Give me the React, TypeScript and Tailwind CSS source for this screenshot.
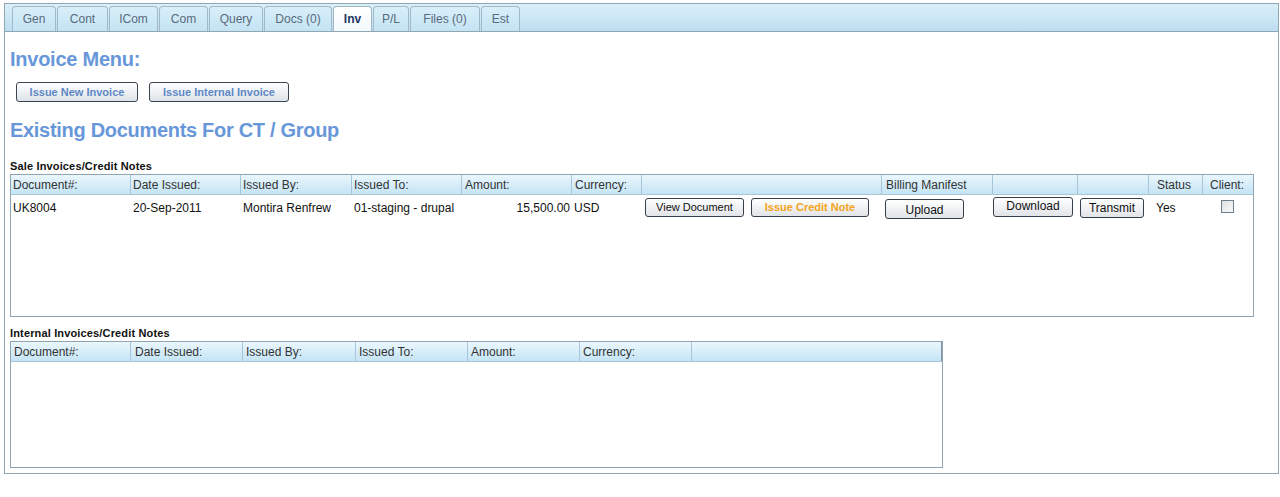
import React from "react";

const tabs: { label: string; w: string; active?: boolean }[] = [
  { label: "Gen", w: "w-[44px]" },
  { label: "Cont", w: "w-[51px]" },
  { label: "ICom", w: "w-[49px]" },
  { label: "Com", w: "w-[49px]" },
  { label: "Query", w: "w-[54px]" },
  { label: "Docs (0)", w: "w-[68px]" },
  { label: "Inv", w: "w-[39px]", active: true },
  { label: "P/L", w: "w-[36px]" },
  { label: "Files (0)", w: "w-[70px]" },
  { label: "Est", w: "w-[39px]" },
];

const headCell =
  "h-full flex items-center text-[12px] text-[#333] border-l border-[#a9c6d8] whitespace-nowrap";

function TopButton({ children, w }: { children: React.ReactNode; w: string }) {
  return (
    <button
      className={`${w} h-[20px] rounded-[3px] border border-[#3c4650] bg-gradient-to-b from-white to-[#dde3e9] text-[11px] font-bold text-[#5f88c6] flex items-center justify-center leading-none`}
    >
      {children}
    </button>
  );
}

function RowButton({
  children,
  cls,
}: {
  children: React.ReactNode;
  cls: string;
}) {
  return (
    <button
      className={`rounded-[3px] border border-[#36404a] bg-gradient-to-b from-white to-[#e1e4e8] flex justify-center leading-none ${cls}`}
    >
      {children}
    </button>
  );
}

export default function App() {
  return (
    <div className="w-[1280px] h-[497px] bg-white font-['Liberation_Sans',Arial,sans-serif] pt-[3px]">
      <div className="ml-[4px] w-[1275px] h-[471px] border border-[#8fa7b3] flex flex-col">
        {/* Tab strip */}
        <div className="h-[28px] shrink-0 border-b border-[#8fa7b3] bg-gradient-to-b from-[#dbeff9] to-[#bddef0] flex items-end gap-[1px] pl-[7px]">
          {tabs.map((t) => (
            <div
              key={t.label}
              className={`${t.w} h-[25px] rounded-t-[4px] border border-b-0 flex items-center justify-center text-[12px] ${
                t.active
                  ? "bg-gradient-to-b from-white to-[#f3f9fc] border-[#9fb6c3] font-bold text-[#1d3661]"
                  : "bg-gradient-to-b from-[#d9eff9] to-[#c3e3f4] border-[#a2bac8] text-[#5a6a7c]"
              }`}
            >
              {t.label}
            </div>
          ))}
        </div>

        {/* Content */}
        <div className="pl-[5px] pt-[16px] flex flex-col">
          <h1 className="text-[20px] leading-[23px] font-bold text-[#6897d9] tracking-[-0.25px]">
            Invoice Menu:
          </h1>
          <div className="mt-[11px] ml-[6px] flex gap-[11px]">
            <TopButton w="w-[122px]">Issue New Invoice</TopButton>
            <TopButton w="w-[140px]">Issue Internal Invoice</TopButton>
          </div>
          <h1 className="mt-[17px] text-[20px] leading-[23px] font-bold text-[#6897d9] tracking-[-0.3px]">
            Existing Documents For CT / Group
          </h1>

          <div className="mt-[18px] text-[11px] leading-[13px] font-bold text-[#111] tracking-[0.15px]">
            Sale Invoices/Credit Notes
          </div>

          {/* Sale table */}
          <div className="mt-[1px] w-[1244px] h-[143px] border border-[#8ea4b2]">
            <div className="h-[20px] grid grid-cols-[119px_110px_111px_110px_110px_70px_240px_111px_85px_71px_54px_51px] bg-gradient-to-b from-[#ebf7fd] to-[#c4e4f5] border-b border-[#a9c6d8]">
              <div className={`${headCell} border-l-0 pl-[2px]`}>Document#:</div>
              <div className={`${headCell} pl-[2px]`}>Date Issued:</div>
              <div className={`${headCell} pl-[2px]`}>Issued By:</div>
              <div className={`${headCell} pl-[2px]`}>Issued To:</div>
              <div className={`${headCell} pl-[3px]`}>Amount:</div>
              <div className={`${headCell} pl-[3px]`}>Currency:</div>
              <div className={headCell}></div>
              <div className={`${headCell} pl-[4px] items-start pt-[1px]`}>Billing Manifest</div>
              <div className={headCell}></div>
              <div className={headCell}></div>
              <div className={`${headCell} pl-[8px] items-start pt-[1px]`}>Status</div>
              <div className={`${headCell} pl-[7px]`}>Client:</div>
            </div>
            <div className="h-[26px] grid grid-cols-[119px_110px_111px_110px_110px_70px_240px_111px_85px_71px_54px_51px] text-[12px] text-[#111]">
              <div className="flex items-center pl-[2px]">UK8004</div>
              <div className="flex items-center pl-[3px]">20-Sep-2011</div>
              <div className="flex items-center pl-[3px]">Montira Renfrew</div>
              <div className="flex items-center pl-[3px]">01-staging - drupal</div>
              <div className="flex items-center justify-end pr-[1px]">15,500.00</div>
              <div className="flex items-center pl-[3px]">USD</div>
              <div className="flex items-start pt-[3px] pl-[4px] gap-[7px]">
                <RowButton cls="w-[99px] h-[19px] items-center text-[11px] text-[#111]">
                  View Document
                </RowButton>
                <RowButton cls="w-[118px] h-[19px] items-center text-[11px] font-bold text-[#f3a41c]">
                  Issue Credit Note
                </RowButton>
              </div>
              <div className="flex items-start pt-[4px] pl-[4px]">
                <RowButton cls="w-[79px] h-[20px] items-end pb-[2px] text-[12px] text-[#111]">
                  Upload
                </RowButton>
              </div>
              <div className="flex items-start pt-[2px] pl-[1px]">
                <RowButton cls="w-[80px] h-[20px] items-start pt-[2px] text-[12px] text-[#111]">
                  Download
                </RowButton>
              </div>
              <div className="flex items-start pt-[3px] pl-[3px]">
                <RowButton cls="w-[64px] h-[20px] items-center text-[12px] text-[#111]">
                  Transmit
                </RowButton>
              </div>
              <div className="flex items-center pl-[8px]">Yes</div>
              <div className="flex items-start pt-[5px] pl-[19px]">
                <div className="w-[13px] h-[13px] border border-[#6f808c] bg-gradient-to-br from-[#dcdfe2] to-[#fbfbfb]" />
              </div>
            </div>
          </div>

          <div className="mt-[10px] text-[11px] leading-[13px] font-bold text-[#111] tracking-[0.15px]">
            Internal Invoices/Credit Notes
          </div>

          {/* Internal table */}
          <div className="mt-[1px] w-[933px] h-[127px] border border-[#8ea4b2]">
            <div className="h-[20px] grid grid-cols-[119px_112px_113px_112px_112px_112px_251px] bg-gradient-to-b from-[#ebf7fd] to-[#c4e4f5] border-b border-[#a9c6d8]">
              <div className={`${headCell} border-l-0 pl-[3px]`}>Document#:</div>
              <div className={`${headCell} pl-[4px]`}>Date Issued:</div>
              <div className={`${headCell} pl-[3px]`}>Issued By:</div>
              <div className={`${headCell} pl-[3px]`}>Issued To:</div>
              <div className={`${headCell} pl-[3px]`}>Amount:</div>
              <div className={`${headCell} pl-[3px]`}>Currency:</div>
              <div className={`${headCell} border-r border-r-[#7f95a3]`}></div>
            </div>
          </div>
        </div>
      </div>
    </div>
  );
}
